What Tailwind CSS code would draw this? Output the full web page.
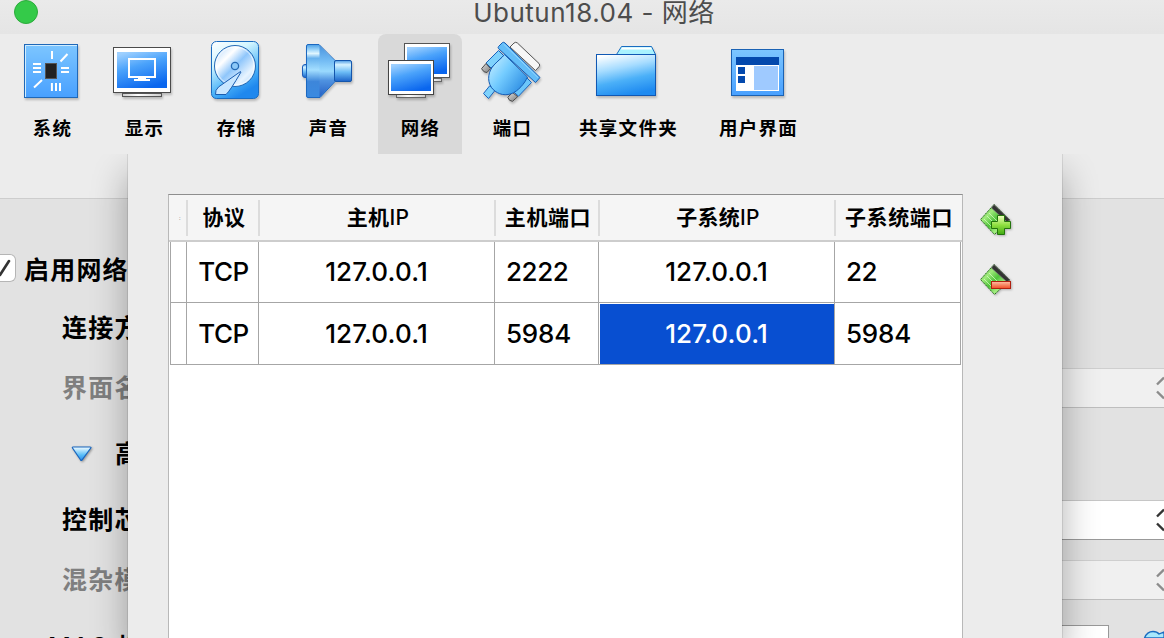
<!DOCTYPE html>
<html lang="zh-CN">
<head>
<meta charset="utf-8">
<title>Ubutun18.04 - 网络</title>
<script src="https://cdn.jsdelivr.net/npm/@tailwindcss/browser@4"></script>
</head>
<body class="w-[1164px] h-[638px] overflow-hidden bg-[#ececec] text-black font-['Inter','Noto_Sans_CJK_SC',sans-serif]">
<svg class="absolute size-0">
  <defs>
    <linearGradient id="tile" x1="0" y1="0" x2="0" y2="1"><stop offset="0" stop-color="#7dc6ff"/><stop offset="1" stop-color="#48a0ff"/></linearGradient>
    <linearGradient id="screen" x1="0.2" y1="0" x2="0.6" y2="1"><stop offset="0" stop-color="#9ed0ff"/><stop offset=".4" stop-color="#4ba3fb"/><stop offset="1" stop-color="#0a66ee"/></linearGradient>
    <linearGradient id="stand" x1="0" x2="1"><stop offset="0" stop-color="#ccc"/><stop offset=".4" stop-color="#fff"/><stop offset="1" stop-color="#ccc"/></linearGradient>
    <linearGradient id="drive" x1="0" y1="0" x2=".5" y2="1"><stop offset="0" stop-color="#fff"/><stop offset=".35" stop-color="#d4f6ff"/><stop offset=".75" stop-color="#4cb4f8"/><stop offset="1" stop-color="#1f88ee"/></linearGradient>
    <linearGradient id="disk" x1="0" y1="0" x2="1" y2="1"><stop offset="0" stop-color="#a9d2fb"/><stop offset=".3" stop-color="#fff"/><stop offset=".5" stop-color="#8fc6fb"/><stop offset=".75" stop-color="#e8f4ff"/><stop offset="1" stop-color="#9bcbfa"/></linearGradient>
    <linearGradient id="horn" x1="0" y1="0" x2="0" y2="1"><stop offset="0" stop-color="#4a9fe6"/><stop offset=".1" stop-color="#9fd6fa"/><stop offset=".17" stop-color="#e0f6ff"/><stop offset=".26" stop-color="#68b2ee"/><stop offset=".48" stop-color="#a4deff"/><stop offset=".7" stop-color="#3d86da"/><stop offset="1" stop-color="#3a8ae0"/></linearGradient>
    <linearGradient id="cone" x1="0" y1="0" x2="0" y2="1"><stop offset="0" stop-color="#4a94de"/><stop offset=".3" stop-color="#74bcf4"/><stop offset=".5" stop-color="#9adafe"/><stop offset=".68" stop-color="#4f92e0"/><stop offset="1" stop-color="#2560c4"/></linearGradient>
    <linearGradient id="tube" x1="0" y1="0" x2="0" y2="1"><stop offset="0" stop-color="#4b9ae4"/><stop offset=".2" stop-color="#d6f2ff"/><stop offset=".55" stop-color="#6cbcf6"/><stop offset="1" stop-color="#1b62c8"/></linearGradient>
    <linearGradient id="plug" x1=".1" y1=".2" x2=".9" y2=".8"><stop offset="0" stop-color="#b4e6ff"/><stop offset=".4" stop-color="#74ccff"/><stop offset="1" stop-color="#3090e4"/></linearGradient>
    <linearGradient id="metal" x1="0" y1="0" x2="1" y2="1"><stop offset="0" stop-color="#ddd"/><stop offset="1" stop-color="#7c7c7c"/></linearGradient>
    <linearGradient id="folder" x1=".2" y1="0" x2=".5" y2="1"><stop offset="0" stop-color="#fff"/><stop offset=".35" stop-color="#a6dcff"/><stop offset=".65" stop-color="#4bb0f8"/><stop offset="1" stop-color="#1e8af0"/></linearGradient>
    <linearGradient id="card" x1="0" y1="0" x2="1" y2="1"><stop offset="0" stop-color="#3f9c30"/><stop offset=".3" stop-color="#a0ea7c"/><stop offset=".5" stop-color="#4fc23a"/><stop offset=".7" stop-color="#a4ee80"/><stop offset="1" stop-color="#2f9620"/></linearGradient>
    <linearGradient id="plus" x1="0" y1="0" x2="0" y2="1"><stop offset="0" stop-color="#efffc0"/><stop offset=".5" stop-color="#8fe040"/><stop offset="1" stop-color="#3faa12"/></linearGradient>
    <linearGradient id="minus" x1="0" y1="0" x2="0" y2="1"><stop offset="0" stop-color="#ffc0a4"/><stop offset="1" stop-color="#f04c24"/></linearGradient>
    <linearGradient id="tri" x1="0" y1="0" x2="0" y2="1"><stop offset="0" stop-color="#f4fdff"/><stop offset=".6" stop-color="#58bdf8"/><stop offset="1" stop-color="#2c8cec"/></linearGradient>
  </defs>
</svg>

<!-- Title bar -->
<header class="relative h-[34px] bg-gradient-to-b from-[#eaeaea] to-[#e5e5e5] flex justify-center">
  <span class="absolute left-[14px] top-0 size-6 rounded-full bg-[#34ca49] border border-[#2cab3c]"></span>
  <h1 class="text-[26px] leading-[26px] tracking-[0.5px] text-[#4d4d4d] whitespace-nowrap pl-[24px]">Ubutun18.04 - 网络</h1>
</header>

<!-- Category toolbar -->
<nav class="h-[120px] pl-[10px] flex gap-2 text-[18.5px] leading-[28px] tracking-[1.3px] font-bold [&_svg]:size-16 [&_svg]:overflow-visible [&_svg]:drop-shadow-[1px_2px_1px_rgba(0,0,0,0.22)] [&>div]:flex [&>div]:flex-col [&>div]:items-center [&>div]:pt-[5px] [&_span]:mt-[11px] [&_span]:pl-px [&_span]:whitespace-nowrap">
  <div class="w-[84px]">
    <svg viewBox="0 0 64 64"><rect x="4.5" y="5.5" width="53" height="53" fill="url(#tile)" stroke="#1f68b8"/><path d="M5.5 58V6.500H57" fill="none" stroke="#d0edff"/><rect x="25.500" y="24.500" width="11" height="15" fill="#222" stroke="#555"/><path d="M32 12v8M31.900 44v8M36 44v8M40 44v8M13 25h8M13 29h8M13 33h8M41 29h8M41 33h8M40.500 22.500l7-7.500M14 48.500l8-7.500" stroke="#fff" stroke-width="2"/></svg>
    <span>系统</span>
  </div>
  <div class="w-[84px]">
    <svg viewBox="0 0 64 64"><rect x="10.500" y="54.500" width="39" height="3" fill="url(#stand)" stroke="#555"/><rect x="1.500" y="8.500" width="57" height="45" fill="#fff" stroke="#4a4a4a"/><rect x="5" y="13" width="50" height="36" fill="url(#screen)"/><rect x="17" y="20" width="26" height="18" fill="none" stroke="#fff" stroke-width="2"/><path d="M26 39.500h8M22 41h16" stroke="#fff" stroke-width="2"/></svg>
    <span>显示</span>
  </div>
  <div class="w-[84px]">
    <svg viewBox="0 0 64 64"><rect x="7.500" y="2.500" width="47" height="57" rx="5" fill="url(#drive)" stroke="#1a6cc0"/><circle cx="31" cy="27" r="20.500" fill="url(#disk)" stroke="#2469b4"/><circle cx="31" cy="27" r="19" fill="none" stroke="#fff" stroke-opacity=".7"/><circle cx="31" cy="27" r="3.600" fill="#8cc8f8" stroke="#2469b4" stroke-width="1.300"/><path d="M36.500 32.500L14.500 48Q11 51 11.500 55.500h10.500Q26 52 37 33z" fill="#c8e6ff" stroke="#1a5cb0"/></svg>
    <span>存储</span>
  </div>
  <div class="w-[84px]">
    <svg viewBox="0 0 64 64"><rect x="6.500" y="25.500" width="8" height="13" rx="2.500" fill="url(#tube)" stroke="#1c5cb8"/><path d="M12 5.500H23L39 21.500V42.500L24 58.500H12Q10.500 58.500 10.500 57V7Q10.500 5.500 12 5.500z" fill="url(#horn)" stroke="#1c68c0"/><path d="M23.500 6.500L38.500 21.500V42.500L23.500 58z" fill="url(#cone)"/><rect x="38.500" y="21.500" width="17" height="21" rx="1.500" fill="url(#tube)" stroke="#1456ac"/></svg>
    <span>声音</span>
  </div>
  <div class="w-[84px] bg-[#d9d9d9] rounded-t-lg">
    <svg viewBox="0 0 64 64"><rect x="36.500" y="39.500" width="17" height="3" fill="url(#stand)" stroke="#666"/><rect x="16.500" y="4.500" width="45" height="34" fill="#fff" stroke="#555"/><rect x="19" y="8" width="40" height="27" fill="url(#screen)"/><rect x="8.500" y="55.500" width="29" height="3" fill="url(#stand)" stroke="#666"/><rect x=".5" y="21.500" width="45" height="34" fill="#fff" stroke="#444"/><rect x="3" y="25" width="40" height="27" fill="url(#screen)"/></svg>
    <span>网络</span>
  </div>
  <div class="w-[84px]">
    <svg viewBox="0 0 64 64" stroke-linejoin="round"><path d="M30 8l4-4q1.700-1.500 3.400 0L59 24.500q1.500 1.500 0 3.200L55.500 31.500z" fill="#f7f7f7" stroke="#555"/><path d="M18.500 11.500l5 5L11 29 6 24z" fill="#7fd2fc" stroke="#1a62bc"/><path d="M6 24.500l4.500 5L7 33.500q-3 .5-5.500-3.800z" fill="url(#metal)" stroke="#4a4a4a"/><path d="M46.500 38.500l5 5-13 13.700-5-4.500z" fill="#6cc6fa" stroke="#1a62bc"/><path d="M32.500 53.500l5.200 4.200-5.200 4.600q-3.500 0-4.700-4z" fill="url(#metal)" stroke="#4a4a4a"/><path d="M9.700 46.800l5 5L8.500 59.500 3.500 54.500z" fill="#7fd2fc" stroke="#1a62bc"/><path d="M24.500 15.500L47.500 38C45 44 38 52.500 31 54.800C23 57.500 15.500 54 11.500 48.500C6.500 41 8.500 32 14 26C18 21.500 22 19 24.500 15.500z" fill="url(#plug)" stroke="#155cb4"/><path d="M18.500 7.500L22.500 3.500Q23.700 2.800 25 4L60 38.500 55.500 43.500 18.500 9.500q-.8-1 0-2z" fill="#63bdf8" stroke="#155cb4"/><path d="M23.500 5L58 38.500" stroke="#a4dcff" stroke-opacity=".8"/></svg>
    <span>端口</span>
  </div>
  <div class="w-[132px]">
    <svg viewBox="0 0 64 64"><path d="M20.500 15.500l5-8h30l4 8z" fill="#a8f2ff" stroke="#1a6cc0"/><path d="M26 8.500h29l1 2H25z" fill="#fff"/><rect x="2.500" y="15.500" width="59" height="41" transform="translate(-2)" fill="url(#folder)" stroke="#1058b4"/></svg>
    <span>共享文件夹</span>
  </div>
  <div class="w-[112px]">
    <svg viewBox="0 0 64 64"><rect x="5.500" y="10.500" width="52" height="46" fill="url(#tile)" stroke="#1a62b4"/><rect x="10" y="18" width="43" height="34" fill="#fff"/><path d="M10 18h43v8H10zM12 28h7v7h-7zM12 37h7v7h-7z" fill="#0449ad"/><rect x="28" y="27" width="24" height="24" fill="#9fcaff"/></svg>
    <span>用户界面</span>
  </div>
</nav>

<!-- Settings page with the port-forwarding sheet in front -->
<main class="h-[484px] flex overflow-hidden bg-[linear-gradient(#ececec_44px,#cdcdcd_44px,#cdcdcd_45px,#e2e2e2_45px)]">
  <section class="w-[128px] overflow-hidden whitespace-nowrap text-[25px] leading-[36px] tracking-[1.2px] font-bold pt-[98px] flex flex-col">
    <div class="h-[36px] flex items-center">
      <span class="w-[16px] h-[28px] -mt-[5px] bg-white border border-l-0 border-[#b5b5b5] rounded-r-md shrink-0"><svg class="w-[15px] h-[26px]" viewBox="0 0 15 26"><path d="M0 20L9 6" fill="none" stroke="#333" stroke-width="2.600" stroke-linecap="round"/></svg></span>
      <span class="ml-[8px]">启用网络</span>
    </div>
    <div class="mt-[22px] pl-[62px]">连接方式</div>
    <div class="mt-[24px] pl-[62px] text-[#7f7f7f]">界面名称</div>
    <div class="mt-[30px] h-[36px] pl-[71px] flex items-center">
      <svg class="w-[22px] h-[18px] shrink-0 drop-shadow-[1px_1px_1px_rgba(0,0,0,0.35)]" viewBox="0 0 22 18"><path d="M1.500 3Q1 2 2 2H19q1.500 0 .8 1L11 15q-.7.800-1.400 0z" fill="url(#tri)" stroke="#1766c0" stroke-width="1.200"/></svg>
      <span class="ml-[22px]">高级</span>
    </div>
    <div class="mt-[30px] pl-[62px]">控制芯片</div>
    <div class="mt-[24px] pl-[62px] text-[#7f7f7f]">混杂模式</div>
    <div class="mt-[31px] pl-[48px] font-medium">MAC <span class="font-bold">地址</span></div>
  </section>

  <section class="relative z-10 w-[934px] shrink-0 bg-[#ececec] flex pt-[40px] pl-[40px] shadow-[0_0_1px_rgba(0,0,0,0.5),0_20px_34px_rgba(0,0,0,0.32)]">
    <div class="w-[795px] h-[460px] bg-white border border-t-[#8e8e8e] border-x-[#b8b8b8]">
      <div class="h-[47px] pl-px bg-[#f5f5f5] border-b-2 border-[#cdcdcd] flex text-[21px] leading-[46px] tracking-[0.6px] font-bold whitespace-nowrap [&>div]:relative [&_i]:absolute [&_i]:right-0 [&_i]:top-[5px] [&_i]:h-[36px] [&_i]:w-[2px] [&_i]:bg-[#dcdcdc]">
        <div class="w-[18px] text-[5px] text-[#999] pl-[9px]">:<i></i></div>
        <div class="w-[72px] text-center">协议<i></i></div>
        <div class="w-[236px] text-center tracking-[0.3px]">主机<span class="font-medium">IP</span><i></i></div>
        <div class="w-[104px] text-center">主机端口<i></i></div>
        <div class="w-[236px] text-center tracking-[0.3px]">子系统<span class="font-medium">IP</span><i></i></div>
        <div class="w-[126px] text-center">子系统端口</div>
      </div>
      <div class="ml-px w-[791px] grid grid-cols-[16px_72px_236px_104px_236px_126px] text-[26px] font-medium border-l border-[#a6a6a6] [&>div]:border-r [&>div]:border-b [&>div]:border-[#a6a6a6] [&>div]:flex [&>div]:items-center">
        <div class="h-[61px]"></div>
        <div class="justify-center pb-[2px] pl-[2px] tracking-[-0.5px]">TCP</div>
        <div class="justify-center pb-[2px] tracking-[0.15px]">127.0.0.1</div>
        <div class="pl-[11px] pb-[2px] tracking-[-0.4px]">2222</div>
        <div class="justify-center pb-[2px] tracking-[0.15px]">127.0.0.1</div>
        <div class="pl-[11px] pb-[2px] tracking-[-0.4px]">22</div>
        <div class="h-[62px]"></div>
        <div class="justify-center pl-[2px] tracking-[-0.5px]">TCP</div>
        <div class="justify-center tracking-[0.15px]">127.0.0.1</div>
        <div class="pl-[11px] tracking-[-0.2px]">5984</div>
        <div class="pt-px pl-px"><span class="bg-[#084fd1] text-white w-full h-full flex items-center justify-center pb-[2px] pr-px tracking-[0.15px]">127.0.0.1</span></div>
        <div class="pl-[11px] tracking-[-0.2px]">5984</div>
      </div>
    </div>
    <div class="ml-[16px] pt-[9px] flex flex-col gap-[26px] [&_svg]:w-[34px] [&_svg]:h-[34px] [&_svg]:drop-shadow-[1px_1px_1px_rgba(0,0,0,0.25)]">
      <svg viewBox="0 0 34 34"><path d="M15 1.500L31 17 15.500 31.500 1.500 16.500z" fill="url(#card)" stroke="#256b1c" stroke-dasharray="1.500 .8"/><path d="M15 1.500L31 17l-3 2L12.500 5z" fill="#333" stroke="#777" stroke-width=".7"/><path d="M5 16l9 9M8 13l10 10M10 10l11 11" stroke="#d8ffc4" stroke-opacity=".7"/><path d="M18.500 12.500h7v6h6v7h-6v6h-7v-6h-6v-7h6z" fill="url(#plus)" stroke="#23740c"/></svg>
      <svg viewBox="0 0 34 34"><path d="M15 1.500L31 17 15.500 31.500 1.500 16.500z" fill="url(#card)" stroke="#256b1c" stroke-dasharray="1.500 .8"/><path d="M15 1.500L31 17l-3 2L12.500 5z" fill="#333" stroke="#777" stroke-width=".7"/><path d="M5 16l9 9M8 13l10 10M10 10l11 11" stroke="#d8ffc4" stroke-opacity=".7"/><rect x="12.500" y="18.500" width="19" height="7" fill="url(#minus)" stroke="#b02010"/></svg>
    </div>
  </section>

  <section class="w-[102px] shrink-0 pt-[214px] flex flex-col">
    <div class="h-[40px] bg-[#f0f0f0] border-y border-t-[#cfcfcf] border-b-[#bebebe] flex items-center justify-end"><svg class="w-[8px] h-[24px]" viewBox="0 0 8 24" fill="none" stroke="#8c8c8c" stroke-width="2.400"><path d="M1 8.500L8 1.500M1 15.500l7 7"/></svg></div>
    <div class="mt-[92px] h-[40px] bg-white border-y border-t-[#c6c6c6] border-b-[#999] flex items-center justify-end"><svg class="w-[8px] h-[24px]" viewBox="0 0 8 24" fill="none" stroke="#333" stroke-width="2.400"><path d="M1 8.500L8 1.500M1 15.500l7 7"/></svg></div>
    <div class="mt-[20px] h-[40px] bg-[#f0f0f0] border-y border-t-[#cfcfcf] border-b-[#bebebe] flex items-center justify-end"><svg class="w-[8px] h-[24px]" viewBox="0 0 8 24" fill="none" stroke="#8c8c8c" stroke-width="2.400"><path d="M1 8.500L8 1.500M1 15.500l7 7"/></svg></div>
    <div class="mt-[25px] h-[13px] flex justify-between">
      <span class="w-[47px] bg-white border-t border-r border-[#999]"></span>
      <svg class="w-[21px] h-[13px]" viewBox="0 0 21 13"><path d="M1.500 13Q4 6.500 10 6.500Q14 6.500 16 9L21 7V13z" fill="#a8e8fc" stroke="#1a6cc0" stroke-width="1.300"/></svg>
    </div>
  </section>
</main>
</body>
</html>
